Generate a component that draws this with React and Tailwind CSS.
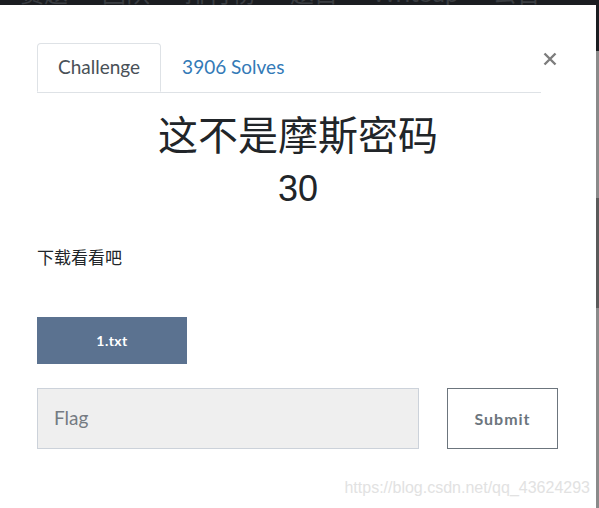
const NAV = ['赛题', '团队', '排行榜', '题目', 'Writeup', '公告'];

export default function App() {
  return (
    <div className="w-[599px] h-[508px] flex flex-col bg-white overflow-hidden font-['Lato','Noto_Sans_CJK_SC',sans-serif]">
      {/* dark page header, mostly hidden behind the modal */}
      <div className="h-[5px] bg-[#1b1d21] overflow-hidden flex">
        <div className="flex gap-[34px] pl-[20px] -mt-[19px] text-[24px] text-[#3a3d42] leading-none">
          {NAV.map((n) => (
            <span key={n}>{n}</span>
          ))}
        </div>
      </div>

      <div className="flex flex-1">
        <div className="flex-1 relative px-[37px] pt-[38px]">
          {/* tabs */}
          <div className="w-[504px] flex border-b border-[#dee2e6]">
            <div className="h-[49px] px-[20px] -mb-px flex items-center bg-white border border-[#dee2e6] border-b-white rounded-t-[4px] text-[19px] text-[#495057]">
              Challenge
            </div>
            <div className="h-[49px] px-[21px] flex items-center text-[19px] text-[#337ab7]">
              3906 Solves
            </div>
          </div>

          <button className="absolute left-[540px] top-[44px] w-[20px] h-[20px] flex items-center justify-center">
            <svg width="14" height="14" viewBox="0 0 14 14">
              <path d="M1.5 1.5 L12.5 12.5 M12.5 1.5 L1.5 12.5" stroke="#7d7d7d" strokeWidth="2.4" strokeLinecap="butt" />
            </svg>
          </button>

          {/* title */}
          <div className="mt-[16px] text-center text-[#212529]">
            <h2 className="text-[40px] leading-[48px] font-['Noto_Sans_CJK_SC',sans-serif] font-normal">这不是摩斯密码</h2>
            <h3 className="mt-[10px] text-[36px] leading-[44px] font-['Liberation_Sans','Noto_Sans_CJK_SC',sans-serif]">30</h3>
          </div>

          <p className="mt-[34px] text-[17px] leading-[24px] text-[#212529] font-['Noto_Sans_CJK_SC',sans-serif]">下载看看吧</p>

          <div className="mt-[48px]">
            <button className="w-[150px] h-[47px] bg-[#5b7290] text-white text-[14px] font-bold tracking-[0.03em]">1.txt</button>
          </div>

          <div className="mt-[24px] flex gap-[28px]">
            <div className="w-[382px] h-[61px] bg-[#efefef] border border-[#ccd2da] flex items-center px-[16px] text-[19px] text-[#757b82]">
              Flag
            </div>
            <button className="w-[111px] h-[61px] border border-[#6c757d] bg-white text-[16px] font-bold tracking-[0.06em] text-[#6c757d]">
              Submit
            </button>
          </div>

          <div className="absolute right-[6px] bottom-[8px] text-[16px] text-[#e2e2e2] font-['Liberation_Sans',sans-serif]">
            https://blog.csdn.net/qq_43624293
          </div>
        </div>

        {/* scrollbar strip */}
        <div className="w-[3px] flex flex-col bg-[#8a8a8a]">
          <div className="h-[46px] bg-[#1b1d21]" />
          <div className="h-[147px]" />
          <div className="h-[110px] bg-[#5a5a5a]" />
        </div>
      </div>
    </div>
  );
}
